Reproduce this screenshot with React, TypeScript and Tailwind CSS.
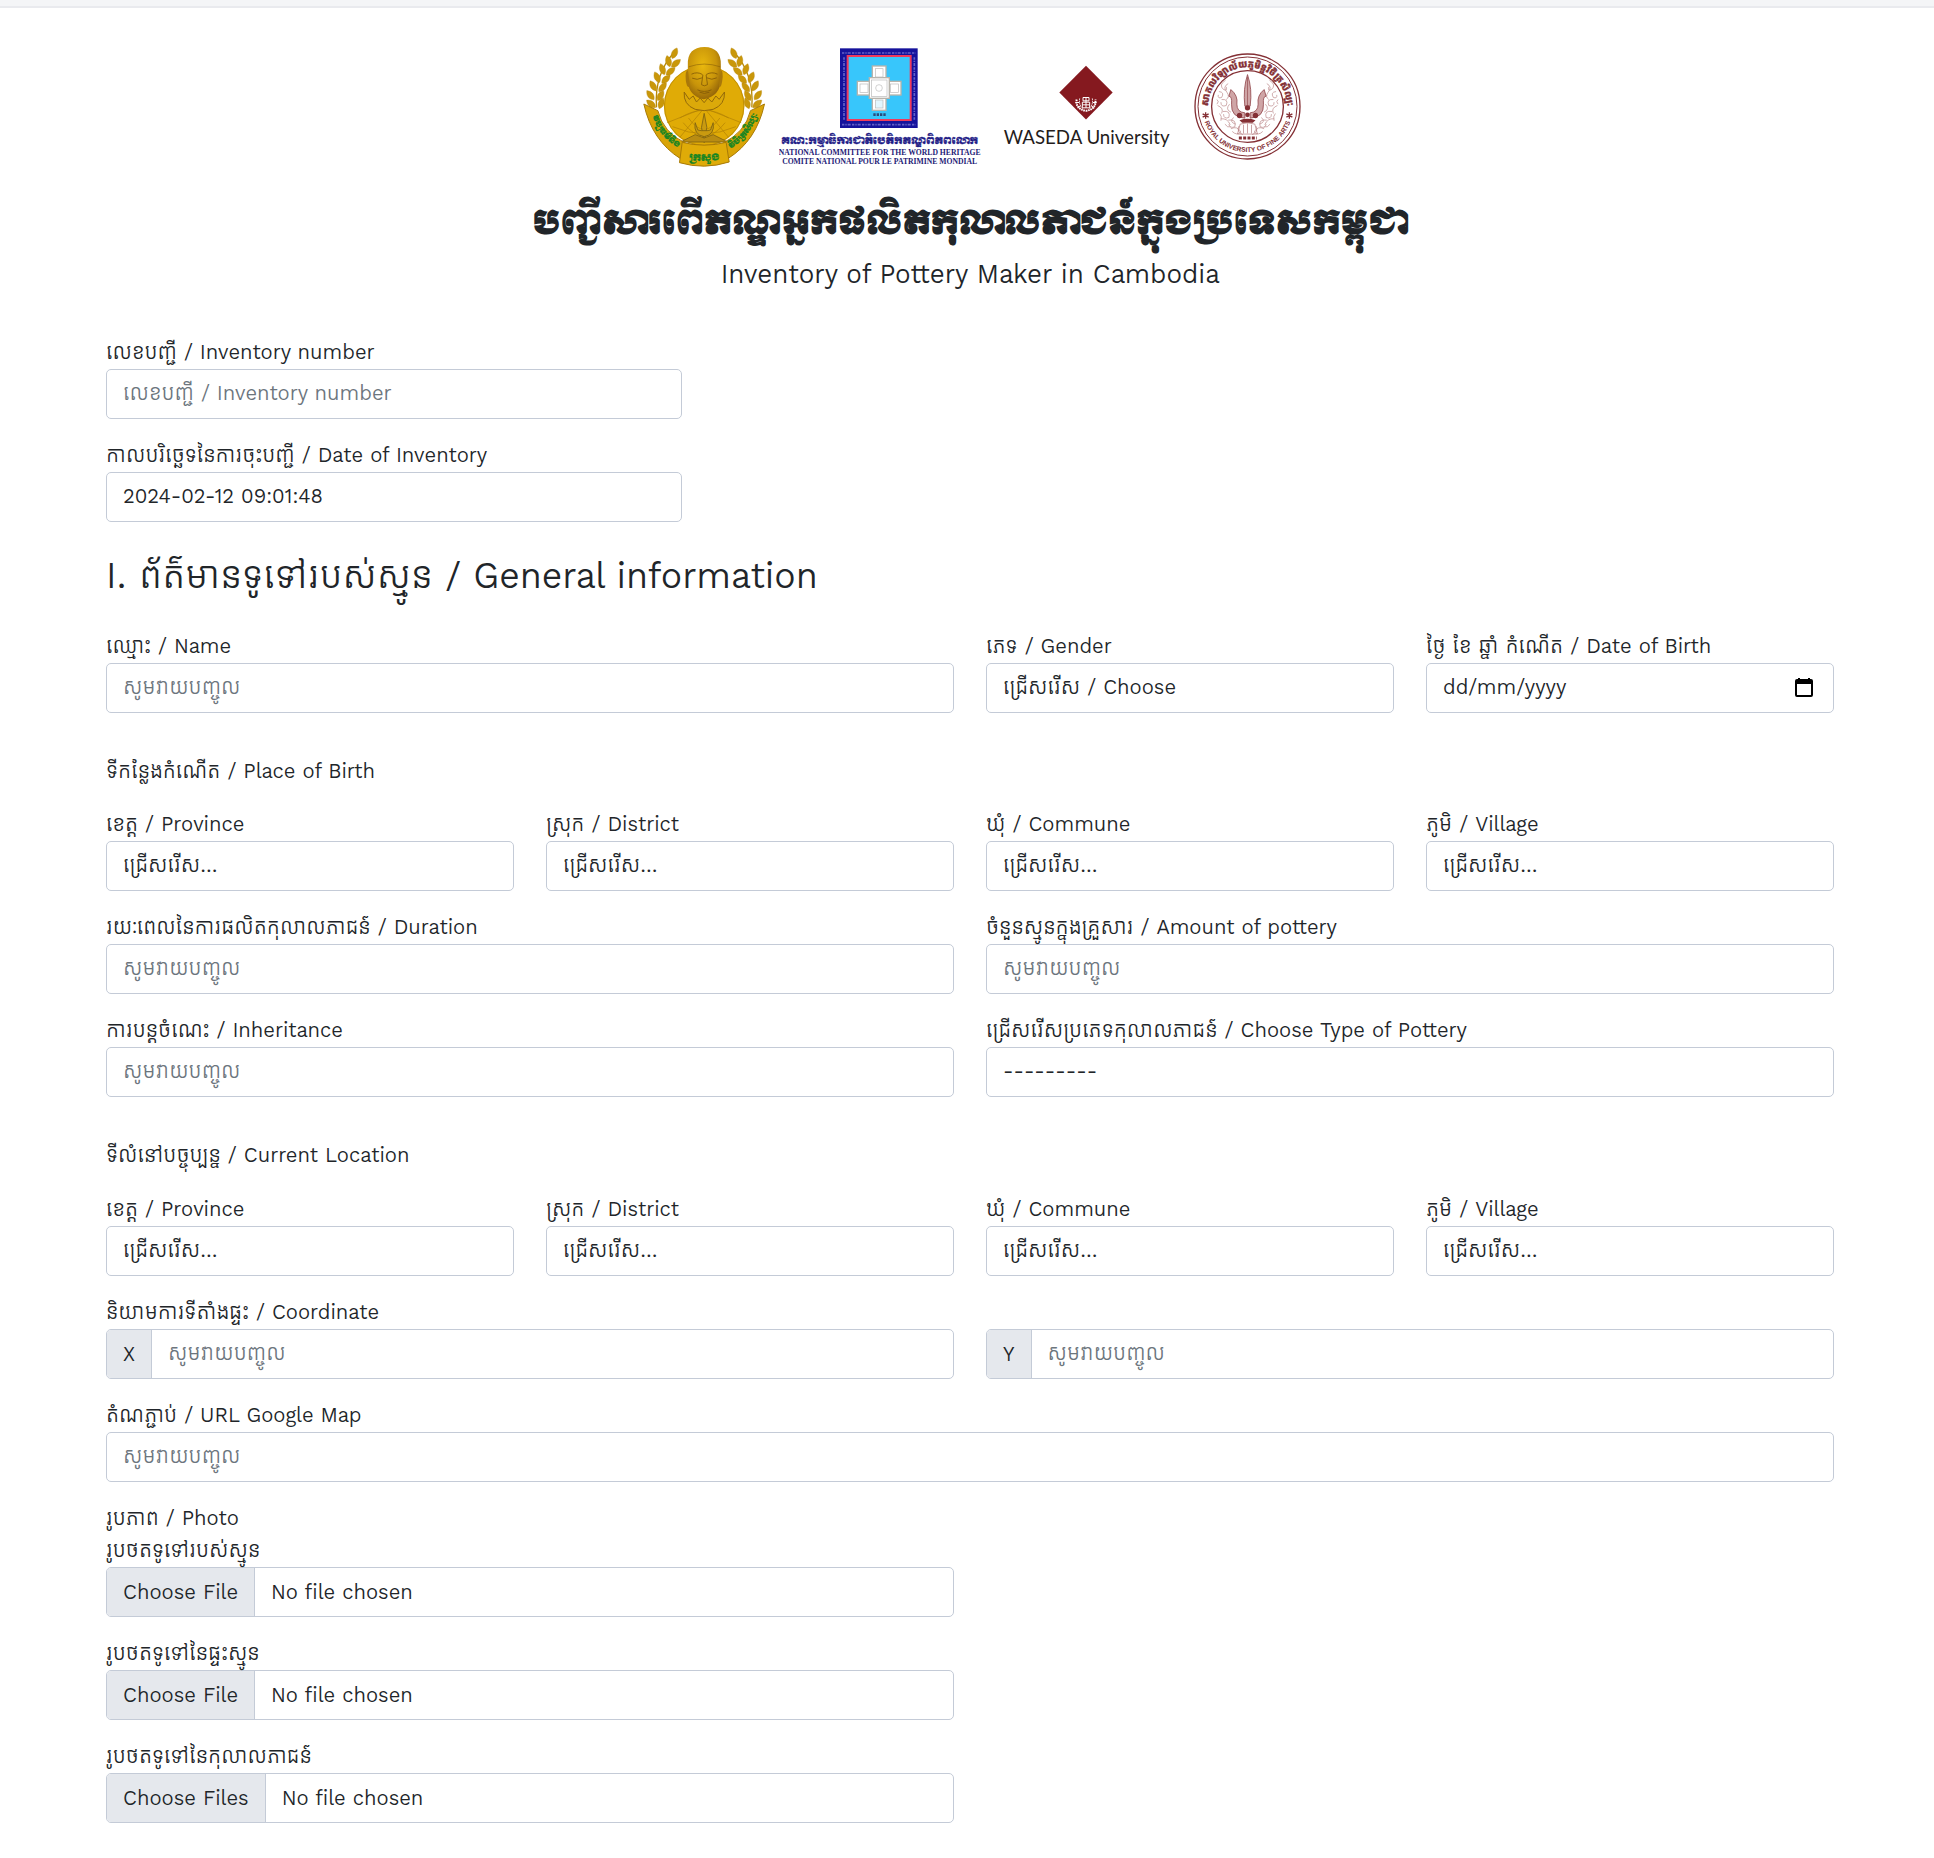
import React, { useId } from "react";

const CONTROL =
  "block h-[50px] w-full appearance-none rounded-[5px] border border-[#c4cbd7] bg-white px-4 pb-[2px] text-[21px] leading-[46px] text-[#212529]";
const MUTED_PLACEHOLDER = "placeholder:overflow-visible placeholder:text-[#6c757d] placeholder:opacity-100";
const DARK_PLACEHOLDER = "placeholder:text-[#212529] placeholder:opacity-100";
const FILE_CONTROL =
  "block h-[50px] w-full overflow-hidden rounded-[5px] border border-[#c4cbd7] bg-white text-[21px] leading-[48px] text-[#212529] file:mr-4 file:h-[48px] file:border-0 file:border-r file:border-solid file:border-[#c4cbd7] file:bg-[#e5e8ed] file:px-4 file:text-[21px] file:text-[#212529]";

const ENTER = "សូមវាយបញ្ចូល";
const CHOOSE = "ជ្រើសរើស...";

type FieldProps = { label: string; className?: string };

function Label({ id, children }: { id: string; children: React.ReactNode }) {
  return (
    <label htmlFor={id} className="block h-8 whitespace-nowrap leading-[30px]">
      {children}
    </label>
  );
}

function TextField({
  label,
  className = "",
  placeholder = ENTER,
  value,
}: FieldProps & { placeholder?: string; value?: string }) {
  const id = useId();
  return (
    <div className={className}>
      <Label id={id}>{label}</Label>
      <input
        id={id}
        type="text"
        className={`${CONTROL} ${MUTED_PLACEHOLDER}`}
        placeholder={placeholder}
        defaultValue={value}
      />
    </div>
  );
}

function SelectField({ label, className = "", option = CHOOSE }: FieldProps & { option?: string }) {
  const id = useId();
  return (
    <div className={className}>
      <Label id={id}>{label}</Label>
      <select id={id} className={CONTROL}>
        <option>{option}</option>
      </select>
    </div>
  );
}

function DateField({ label }: FieldProps) {
  const id = useId();
  return (
    <div>
      <Label id={id}>{label}</Label>
      <div className="relative">
        <input id={id} type="text" className={`${CONTROL} ${DARK_PLACEHOLDER}`} placeholder="dd/mm/yyyy" />
        <button type="button" aria-label="Open calendar" className="absolute top-[14px] right-5">
          <svg width="20" height="21" viewBox="0 0 20 21" fill="none">
            <path d="M5 1v3M15 1v3" stroke="#000" strokeWidth="2" />
            <rect x="2" y="3" width="16" height="16" rx="1" stroke="#000" strokeWidth="2" />
            <path d="M2 3h16v4H2z" fill="#000" />
          </svg>
        </button>
      </div>
    </div>
  );
}

function FileField({ label, multiple }: FieldProps & { multiple?: boolean }) {
  const id = useId();
  return (
    <div>
      <Label id={id}>{label}</Label>
      <input id={id} type="file" multiple={multiple} className={FILE_CONTROL} />
    </div>
  );
}

function AxisInput({ axis }: { axis: string }) {
  const id = useId();
  return (
    <div className="flex h-[50px] overflow-hidden rounded-[5px] border border-[#c4cbd7]">
      <label htmlFor={id} className="border-r border-[#c4cbd7] bg-[#e5e8ed] px-4 leading-[48px]">
        {axis}
      </label>
      <input
        id={id}
        type="text"
        placeholder={ENTER}
        className={`min-w-0 flex-1 px-4 pb-[2px] text-[21px] leading-[46px] ${MUTED_PLACEHOLDER}`}
      />
    </div>
  );
}

function PlaceFields() {
  return (
    <>
      <SelectField label="ខេត្ត / Province" />
      <SelectField label="ស្រុក / District" />
      <SelectField label="ឃុំ / Commune" />
      <SelectField label="ភូមិ / Village" />
    </>
  );
}

/* Leaves of one laurel branch, as [x, y, rotation]. */
const LEAVES = [
  [134, 68, 25], [116, 92, -15], [138, 98, 50], [98, 116, -20], [122, 122, 50], [82, 140, -25],
  [108, 146, 45], [70, 166, -30], [98, 170, 40], [62, 194, -38], [92, 195, 30], [64, 220, -50],
  [94, 218, 20],
];

function Laurel() {
  return (
    <g>
      <path d="M136 62C100 100 74 150 80 230" stroke="#b98a06" strokeWidth="4" fill="none" />
      {LEAVES.map(([x, y, r]) => (
        <path
          key={`${x}-${y}`}
          transform={`translate(${x} ${y}) rotate(${r})`}
          d="M0-18C12-6 11 8 0 17C-11 8-12-6 0-18Z"
          fill="#c9970a"
          stroke="#b5850a"
          strokeWidth="1"
        />
      ))}
    </g>
  );
}

function MinistryLogo() {
  return (
    <svg width="128" height="124" viewBox="25 40 383 372" role="img" aria-label="Ministry of Culture and Fine Arts">
      <defs>
        <radialGradient id="face" cx="0.45" cy="0.35" r="0.7">
          <stop offset="0" stopColor="#e9b80e" />
          <stop offset="0.6" stopColor="#c8940a" />
          <stop offset="1" stopColor="#8d5f08" />
        </radialGradient>
        <path id="ribbonL" d="M68 250C78 296 104 330 150 354" />
        <path id="ribbonR" d="M298 356C340 332 370 296 382 246" />
        <path id="ribbonB" d="M158 387Q223 396 288 385" />
      </defs>
      <Laurel />
      <g transform="translate(446 0) scale(-1 1)">
        <Laurel />
      </g>
      <circle cx="223" cy="225" r="121" fill="#e0ab06" />
      <g stroke="#b08005" strokeWidth="2" fill="none">
        <circle cx="223" cy="225" r="119" />
        <path d="M223 232L112 276M223 232L334 276M223 232L150 320M223 232L296 320" />
        <path d="M150 262Q223 216 296 262M128 288Q223 330 318 288" />
        <path d="M160 276Q223 356 286 276M176 262Q223 330 270 262" />
      </g>
      <path
        d="M163 184Q160 222 196 236Q223 244 250 236Q286 222 284 184L268 206L258 196L246 214L234 202L223 216L211 202L200 214L190 196L178 206Z"
        fill="#dba90a"
        stroke="#93690a"
        strokeWidth="3"
      />
      <path d="M174 102Q172 50 224 49Q274 50 273 102V146Q272 196 222 206Q176 196 174 150Z" fill="url(#face)" />
      <path d="M174 118Q165 120 168 150Q172 176 180 166M273 118Q282 122 277 152Q273 176 267 166" fill="#a9780a" />
      <g stroke="#7c5407" strokeWidth="3" fill="none" strokeLinecap="round" opacity="0.75">
        <path d="M178 108Q223 92 270 108" strokeWidth="2" />
        <path d="M186 130Q202 122 217 131M230 131Q246 122 262 130" />
        <path d="M188 143Q202 150 216 142M232 142Q246 150 260 142" />
        <path d="M219 134L215 162Q223 169 233 162L229 134" />
        <path d="M204 178Q223 187 244 178M210 185Q223 192 238 185" />
      </g>
      <g stroke="#7d6212" strokeWidth="2.5" fill="#c99a10">
        <path d="M223 248L231 290L223 336L215 290Z" />
        <path d="M196 276Q190 312 223 318Q256 312 250 276L242 298L232 300H214L204 298Z" />
        <path d="M152 334L196 312L223 322L250 312L294 334Z" fill="#b98c12" />
      </g>
      <path
        d="M42 220L84 240Q100 306 168 338L152 384Q66 330 42 220ZM404 220L362 240Q346 306 278 338L294 384Q380 330 404 220Z"
        fill="#d9a406"
        stroke="#a87a06"
        strokeWidth="3"
      />
      <path
        d="M157 335Q223 352 289 335L298 394Q223 418 149 396Z"
        fill="#dfab08"
        stroke="#a87a06"
        strokeWidth="3"
      />
      <g
        fill="#128424"
        stroke="#128424"
        strokeWidth="1"
        fontFamily="Moul, 'Khmer OS Muol Light', 'Noto Sans', sans-serif"
      >
        <text fontSize="22"><textPath href="#ribbonL" startOffset="50%" textAnchor="middle">វប្បធម៌និង</textPath></text>
        <text fontSize="22"><textPath href="#ribbonR" startOffset="50%" textAnchor="middle">វិចិត្រសិល្បៈ</textPath></text>
        <text fontSize="28"><textPath href="#ribbonB" startOffset="50%" textAnchor="middle">ក្រសួង</textPath></text>
      </g>
    </svg>
  );
}

function HeritageLogo() {
  return (
    <svg width="202" height="120" viewBox="448 48 606 360" role="img" aria-label="National Committee for the World Heritage">
      <rect x="631" y="55" width="233" height="239" fill="#15129c" />
      <g stroke="#8d8be0" strokeWidth="5" strokeDasharray="7 3 4 3 9 4" opacity="0.65">
        <path d="M637 69H858M637 284H858M643 82V272M854 82V272" />
      </g>
      <rect x="654" y="78" width="189" height="192" fill="#38c6fb" stroke="#ef3a5c" strokeWidth="6" />
      <g stroke="#b7b4ac" strokeWidth="4" fill="#fff">
        <rect x="728" y="108" width="41" height="42" />
        <rect x="728" y="202" width="41" height="39" />
        <rect x="683" y="154" width="42" height="41" />
        <rect x="773" y="154" width="41" height="41" />
        <rect x="719" y="143" width="60" height="62" />
      </g>
      <g stroke="#b9b9b9" strokeWidth="2" fill="none">
        <rect x="737" y="116" width="23" height="25" />
        <rect x="737" y="210" width="23" height="24" fill="#e2f6fe" />
        <rect x="691" y="162" width="24" height="25" />
        <rect x="782" y="162" width="24" height="25" />
        <rect x="725" y="150" width="47" height="49" />
        <circle cx="748" cy="174" r="10" />
      </g>
      <path d="M731 254H768" stroke="#2b4b7c" strokeWidth="8" strokeDasharray="7 3" />
      <text
        x="750"
        y="342"
        textAnchor="middle"
        fontSize="29"
        fill="#1d1a86"
        stroke="#1d1a86"
        strokeWidth="1"
        fontFamily="Moul, 'Khmer OS Muol Light', 'Noto Sans', sans-serif"
      >
        គណៈកម្មាធិការជាតិបេតិកភណ្ឌពិភពលោក
      </text>
      <g fill="#1d1a76" fontFamily="Liberation Serif, serif" fontWeight="700" fontSize="23" textAnchor="middle">
        <text x="750" y="376">NATIONAL COMMITTEE FOR THE WORLD HERITAGE</text>
        <text x="750" y="403">COMITE NATIONAL POUR LE PATRIMINE MONDIAL</text>
      </g>
    </svg>
  );
}

function WasedaLogo() {
  return (
    <svg width="186" height="87" viewBox="42 100 558 260" role="img" aria-label="Waseda University">
      <path d="M318 108L398 188L318 269L238 188Z" fill="#85191f" />
      <g stroke="#fff" fill="none" strokeWidth="3">
        <path d="M309 203H327V213H309ZM307 217H329V234H307ZM318 203V234M307 225H329" />
        <path d="M290 209Q286 238 318 243Q350 238 346 209" strokeDasharray="5 2" strokeWidth="6" />
        <path d="M299 206Q296 228 309 236M337 206Q340 228 327 236" strokeDasharray="4 2" />
        <path d="M286 218H298M338 218H350M293 234L302 228M343 234L334 228" />
      </g>
      <text x="320" y="342" textAnchor="middle" fontSize="56" fill="#241c1b" fontFamily="Lato, sans-serif">
        WASEDA University
      </text>
    </svg>
  );
}

function Flourish() {
  return (
    <g fill="none" stroke="#b98587" strokeWidth="2">
      <path d="M736 150Q714 164 730 178Q742 184 738 170M716 184Q734 186 724 202Q712 206 714 194M724 208Q746 206 738 226Q722 232 722 216M712 226Q732 234 724 250M728 244Q752 240 746 262Q730 268 730 252M722 266Q742 264 750 284M744 270Q770 266 764 290Q748 296 746 282M752 296Q772 286 782 306Q770 318 756 304" />
      <path d="M744 160Q726 170 740 186Q750 200 738 208M748 222Q734 238 752 246M760 262Q746 276 766 282M776 288Q768 304 788 314M710 208Q718 214 710 222M718 250Q726 258 722 272M734 282Q742 294 752 290" />
    </g>
  );
}

function UniversityLogo() {
  return (
    <svg width="109" height="109" viewBox="638 65 328 328" role="img" aria-label="Royal University of Fine Arts">
      <defs>
        <path id="sealTop" d="M684 229A118 118 0 0 1 920 229" />
        <path id="sealBottom" d="M665 229A137 137 0 0 0 939 229" />
      </defs>
      <g fill="none" stroke="#843035">
        <circle cx="802" cy="229" r="158" strokeWidth="4" />
        <circle cx="802" cy="229" r="149" strokeWidth="3" />
        <circle cx="802" cy="229" r="108" strokeWidth="4" />
      </g>
      <Flourish />
      <g transform="translate(1604 0) scale(-1 1)">
        <Flourish />
      </g>
      <g fill="#cfa5a6" stroke="#934a4e" strokeWidth="2.5">
        <path d="M802 133Q788 176 794 228H810Q817 176 802 133Z" />
        <path d="M752 178Q774 196 770 222Q770 246 794 248V264Q752 262 754 222Q756 198 746 198Z" />
        <path d="M852 178Q830 196 834 222Q834 246 810 248V264Q852 262 850 222Q848 198 858 198Z" />
      </g>
      <path d="M802 140V226" stroke="#934a4e" strokeWidth="2" />
      <g fill="#843035">
        <circle cx="802" cy="233" r="8" />
        <circle cx="778" cy="256" r="8" />
        <circle cx="802" cy="254" r="7" />
        <circle cx="826" cy="256" r="8" />
        <path d="M778 270Q802 262 826 270L818 278H786Z" />
      </g>
      <path d="M780 282Q802 274 824 282L832 312H772ZM790 284V310M802 280V310M814 284V310" fill="none" stroke="#b07376" strokeWidth="2" />
      <path d="M776 324H830" stroke="#843035" strokeWidth="9" strokeDasharray="9 4" />
      <g stroke="#843035" strokeWidth="4">
        <path d="M676 246V266M667 251L685 261M685 251L667 261" />
        <path d="M928 246V266M919 251L937 261M937 251L919 261" />
      </g>
      <g fill="#843035" fontWeight="700">
        <text fontSize="29" fontFamily="'Kantumruy Pro', 'Noto Sans', sans-serif" stroke="#843035" strokeWidth="1">
          <textPath href="#sealTop" startOffset="50%" textAnchor="middle">សាកលវិទ្យាល័យភូមិន្ទវិចិត្រសិល្បៈ</textPath>
        </text>
        <text fontSize="20" fontFamily="Liberation Sans, sans-serif">
          <textPath href="#sealBottom" startOffset="50%" textAnchor="middle">ROYAL UNIVERSITY OF FINE ARTS</textPath>
        </text>
      </g>
    </svg>
  );
}

export default function App() {
  return (
    <div className="min-h-screen bg-white font-['Kantumruy_Pro','Work_Sans','Noto_Sans',sans-serif] text-[21px] leading-8 text-[#212529]">
      <div className="h-2 border-b-2 border-[#e9eaee] bg-[#f4f5f7]" />
      <main className="pr-[100px] pb-[34px] pl-[106px]">
        <header className="flex flex-col items-center pt-9 pb-[43px]">
          <div className="flex items-center gap-[13px]">
            <MinistryLogo />
            <HeritageLogo />
            <WasedaLogo />
            <UniversityLogo />
          </div>
          <h1 className="mt-[26px] font-[Moul,'Khmer_OS_Muol_Light','Noto_Sans',sans-serif] text-[32px] leading-[60px] font-bold whitespace-nowrap">
            បញ្ជីសារពើភណ្ឌអ្នកផលិតកុលាលភាជន៍ក្នុងប្រទេសកម្ពុជា
          </h1>
          <p className="text-[27px] leading-[40px]">Inventory of Pottery Maker in Cambodia</p>
        </header>

        <form>
          <div className="grid w-1/3 gap-[21px]">
            <TextField label="លេខបញ្ជី / Inventory number" placeholder="លេខបញ្ជី / Inventory number" />
            <TextField label="កាលបរិច្ឆេទនៃការចុះបញ្ជី / Date of Inventory" value="2024-02-12 09:01:48" />
          </div>

          <h2 className="mt-[32px] mb-[33px] text-[37px] leading-[44px] whitespace-nowrap">
            I. ព័ត៌មានទូទៅរបស់ស្មូន / General information
          </h2>

          <div className="grid grid-cols-4 gap-x-8">
            <TextField className="col-span-2" label="ឈ្មោះ / Name" />
            <SelectField label="ភេទ / Gender" option="ជ្រើសរើស / Choose" />
            <DateField label="ថ្ងៃ ខែ ឆ្នាំ កំណើត / Date of Birth" />
          </div>

          <p className="mt-[42px] mb-[22px]">ទីកន្លែងកំណើត / Place of Birth</p>
          <div className="grid grid-cols-4 gap-x-8 gap-y-[21px]">
            <PlaceFields />
            <TextField className="col-span-2" label="រយៈពេលនៃការផលិតកុលាលភាជន៍ / Duration" />
            <TextField className="col-span-2" label="ចំនួនស្មូនក្នុងគ្រួសារ / Amount of pottery" />
            <TextField className="col-span-2" label="ការបន្តចំណេះ / Inheritance" />
            <SelectField
              className="col-span-2"
              label="ជ្រើសរើសប្រភេទកុលាលភាជន៍ / Choose Type of Pottery"
              option="---------"
            />
          </div>

          <p className="mt-[42px] mb-[23px]">ទីលំនៅបច្ចុប្បន្ន / Current Location</p>
          <div className="grid grid-cols-4 gap-x-8 gap-y-[21px]">
            <PlaceFields />
            <fieldset className="col-span-4">
              <legend className="h-8 leading-[30px]">និយាមការទីតាំងផ្ទះ / Coordinate</legend>
              <div className="grid grid-cols-2 gap-x-8">
                <AxisInput axis="X" />
                <AxisInput axis="Y" />
              </div>
            </fieldset>
            <TextField className="col-span-4" label="តំណភ្ជាប់ / URL Google Map" />
          </div>

          <div className="mt-[21px] grid grid-cols-2 gap-x-8">
            <fieldset>
              <legend className="h-8 leading-[30px]">រូបភាព / Photo</legend>
              <div className="grid gap-[21px]">
                <FileField label="រូបថតទូទៅរបស់ស្មូន" />
                <FileField label="រូបថតទូទៅនៃផ្ទះស្មូន" />
                <FileField label="រូបថតទូទៅនៃកុលាលភាជន៍" multiple />
              </div>
            </fieldset>
          </div>
        </form>
      </main>
    </div>
  );
}
